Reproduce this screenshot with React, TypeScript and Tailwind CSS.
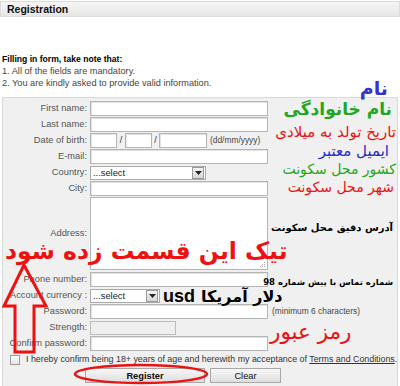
import React from 'react'

const labelCls = "w-[87px] shrink-0 pr-[3px] text-right text-[9.3px] leading-[15px] text-[#555]"
const inputCls = "h-[15px] border border-[#b5b5b5] bg-white shadow-[inset_1px_1px_0_#e2e2e2]"

function Row({ label, children, className = '' }: { label: string; children?: React.ReactNode; className?: string }) {
  return (
    <div className={`flex items-center h-[15px] ${className}`}>
      <div className={labelCls}>{label}</div>
      {children}
    </div>
  )
}

function SelectBox({ width, text }: { width: string; text: string }) {
  return (
    <div className={`flex items-center h-[14px] border border-[#a9a9a9] bg-white ${width}`}>
      <span className="flex-1 pl-[2px] text-[9.3px] leading-[12px] text-[#222]">{text}</span>
      <span className="flex items-center justify-center w-[12px] h-[12px] mr-[1px] border border-[#9a9a9a] bg-gradient-to-b from-[#f4f4f4] to-[#d6d6d6]">
        <svg width="7" height="4" viewBox="0 0 7 4"><path d="M0 0h7L3.5 4z" fill="#222" /></svg>
      </span>
    </div>
  )
}

export default function App() {
  const fa = "font-['DejaVu_Sans',sans-serif] whitespace-nowrap absolute"
  return (
    <div className="relative w-[400px] h-[386px] overflow-hidden bg-white font-['Liberation_Sans',Arial,sans-serif]">
      {/* header */}
      <div className="h-[16px] mt-px border border-[#dcdcdc] bg-gradient-to-b from-[#f6f6f6] to-[#e6e6e6] pl-[6px] text-[10.5px] font-bold leading-[14px] text-[#111]">
        Registration
      </div>

      {/* notes */}
      <div className="mt-[36px] pl-[2px] text-[9.2px] leading-[12px]">
        <p className="font-bold text-[8.6px] text-black">Filling in form, take note that:</p>
        <p className="text-[#444]">1. All of the fields are mandatory.</p>
        <p className="text-[#444]">2. You are kindly asked to provide valid information.</p>
      </div>

      {/* form panel */}
      <div className="mx-[2px] mt-[8px] h-[290px] border border-[#dadada] bg-[#f0f0f0] pt-[3px]">
        <div className="flex flex-col gap-px">
          <Row label="First name:"><div className={`${inputCls} w-[178px]`} /></Row>
          <Row label="Last name:"><div className={`${inputCls} w-[178px]`} /></Row>
          <Row label="Date of birth:">
            <div className={`${inputCls} w-[27px]`} />
            <span className="w-[8px] text-center text-[9px] text-[#333]">/</span>
            <div className={`${inputCls} w-[27px]`} />
            <span className="w-[7px] text-center text-[9px] text-[#333]">/</span>
            <div className={`${inputCls} w-[48px]`} />
            <span className="ml-[3px] text-[8.4px] text-[#444]">(dd/mm/yyyy)</span>
          </Row>
          <Row label="E-mail:"><div className={`${inputCls} w-[178px]`} /></Row>
          <Row label="Country:"><SelectBox width="w-[116px]" text="...select" /></Row>
          <Row label="City:"><div className={`${inputCls} w-[178px]`} /></Row>
          <div className="flex items-center h-[73px]">
            <div className={labelCls}>Address:</div>
            <div className="relative h-[73px] w-[178px] border border-[#b5b5b5] bg-white">
              <svg className="absolute right-[1px] bottom-[1px]" width="7" height="7" viewBox="0 0 7 7">
                <g fill="#aaa"><rect x="5" y="1" width="1" height="1" /><rect x="3" y="3" width="1" height="1" /><rect x="5" y="3" width="1" height="1" /><rect x="1" y="5" width="1" height="1" /><rect x="3" y="5" width="1" height="1" /><rect x="5" y="5" width="1" height="1" /></g>
              </svg>
            </div>
          </div>
          <Row label="Phone number:" className="mt-[1px]"><div className={`${inputCls} w-[178px]`} /></Row>
          <Row label="Account currency :"><SelectBox width="w-[70px]" text="...select" /></Row>
          <Row label="Password:">
            <div className={`${inputCls} w-[178px]`} />
            <span className="ml-[4px] text-[8.4px] text-[#444]">(minimum 6 characters)</span>
          </Row>
          <Row label="Strength:"><div className="h-[14px] w-[86px] border border-[#bdbdbd] bg-[#efefef]" /></Row>
          <Row label="Confirm password:"><div className={`${inputCls} w-[178px]`} /></Row>
        </div>

        <div className="mt-[2px] flex items-center h-[13px] pl-[7px]">
          <span className="h-[10px] w-[10px] shrink-0 border border-[#9c9c9c] bg-gradient-to-b from-[#fdfdfd] to-[#e4e4e4]" />
          <span className="ml-[6px] whitespace-nowrap text-[8.85px] text-[#333]">
            I hereby confirm being 18+ years of age and herewith my acceptance of <span className="underline">Terms and Conditions</span>.
          </span>
        </div>

        <div className="mt-[2px] flex gap-[5px] pl-[82px]">
          <button className="h-[15px] w-[120px] border border-[#a8a8a8] bg-gradient-to-b from-[#f7f7f7] to-[#dedede] text-[9.3px] font-bold leading-[12px] text-[#111]">Register</button>
          <button className="h-[15px] w-[71px] border border-[#a8a8a8] bg-gradient-to-b from-[#f7f7f7] to-[#dedede] text-[9.3px] leading-[12px] text-[#111]">Clear</button>
        </div>
      </div>

      {/* annotations drawn over the screenshot */}
      <span dir="rtl" className={`${fa} right-[12px] top-[74px] text-[19px] font-bold text-[#3333cc]`}>نام</span>
      <span dir="rtl" className={`${fa} right-[8px] top-[97px] text-[17px] font-bold text-[#23a623]`}>نام خانوادگی</span>
      <span dir="rtl" className={`${fa} right-[4px] top-[121px] text-[15px] text-[#ee1111]`}>تاریخ تولد به میلادی</span>
      <span dir="rtl" className={`${fa} right-[11px] top-[140px] text-[15px] text-[#2b2bc8]`}>ایمیل معتبر</span>
      <span dir="rtl" className={`${fa} right-[4px] top-[159px] text-[14px] text-[#23a623]`}>کشور محل سکونت</span>
      <span dir="rtl" className={`${fa} right-[6px] top-[177px] text-[14px] text-[#ee1111]`}>شهر محل سکونت</span>
      <span dir="rtl" className={`${fa} right-[7px] top-[220px] text-[10px] font-bold text-black`}>آدرس دقیق محل سکونت</span>
      <span dir="rtl" className={`${fa} left-[5px] top-[234px] text-[23.5px] font-bold text-[#ee1111]`}>تیک این قسمت زده شود</span>
      <span dir="rtl" className={`${fa} right-[7px] top-[276px] text-[8.5px] font-bold text-black`}>شماره تماس با پیش شماره 98</span>
      <span className="absolute left-[163px] top-[287px] whitespace-nowrap font-['Liberation_Sans',sans-serif] text-[18px] font-bold leading-[18px] text-black">usd</span>
      <span dir="rtl" className={`${fa} left-[201px] top-[285px] text-[16px] font-bold text-black`}>دلار آمریکا</span>
      <span dir="rtl" className={`${fa} left-[270px] top-[316px] text-[21.5px] text-[#ee1111]`}>رمز عبور</span>

      <svg className="absolute left-0 top-0" width="400" height="386" viewBox="0 0 400 386" fill="none">
        <path d="M24 265 L4 306 L15 306 L15 352 L34 352 L34 306 L46 306 Z" stroke="#ee1111" strokeWidth="3" strokeLinejoin="miter" />
        <ellipse cx="141" cy="374" rx="66" ry="9" stroke="#ee1111" strokeWidth="2.5" />
      </svg>
    </div>
  )
}
